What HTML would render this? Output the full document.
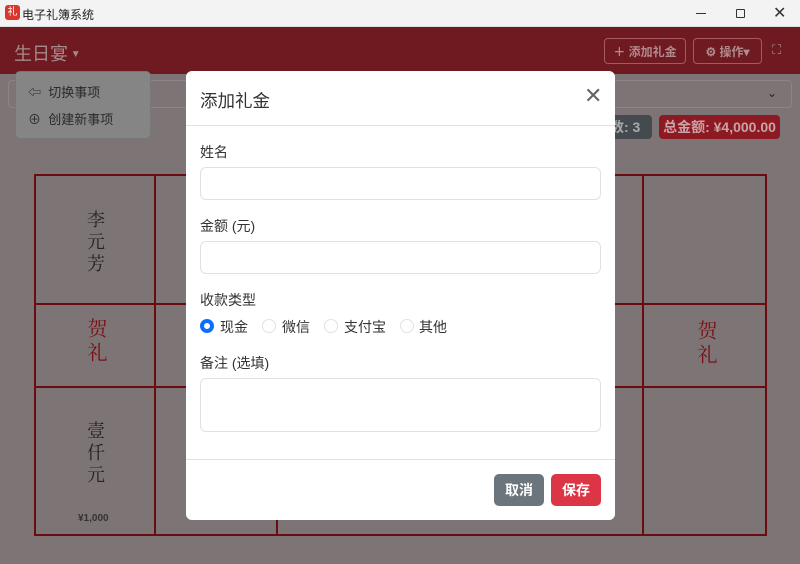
<!DOCTYPE html>
<html><head><meta charset="utf-8"><style>
*{box-sizing:border-box;margin:0;padding:0}
body{width:800px;height:564px;overflow:hidden;position:relative;background:#7d7476;font-family:"Liberation Sans","Noto Sans CJK SC",sans-serif}
.abs{position:absolute}
.tb{left:0;top:0;width:800px;height:27px;background:#f3f3f3;border-bottom:1px solid #ddd}
.hdr{left:0;top:27px;width:800px;height:47px;background:#6f1a21}
.btn{border:1px solid #a55a60;border-radius:4px;color:#b08a8d;font-size:12px;font-weight:bold;display:flex;align-items:center;justify-content:center}
.v{writing-mode:vertical-rl;font-family:"Noto Serif CJK SC",serif;font-size:18px;letter-spacing:4px}
.modal{left:186px;top:71px;width:429px;height:449px;background:#fff;border-radius:6px}
.lbl{font-size:14px;color:#333}
.inp{left:14px;width:401px;border:1px solid #dee2e6;border-radius:6px}
.r{position:absolute;top:248px;width:14px;height:14px;border:1px solid #dee2e6;border-radius:50%}
</style></head><body>
<div class="abs tb"></div>
<div class="abs" style="left:5px;top:5px;width:15px;height:15px;background:#d9372b;border-radius:3px;color:#fff;font-size:10px;text-align:center;line-height:15px">礼</div>
<div class="abs" style="left:22px;top:6px;font-size:12px;color:#222">电子礼簿系统</div>
<div class="abs" style="left:696px;top:13px;width:10px;height:1px;background:#333"></div>
<div class="abs" style="left:736px;top:9px;width:9px;height:9px;border:1px solid #333;border-radius:1px"></div>
<div class="abs" style="left:773px;top:3px;font-size:16px;color:#333">✕</div>
<div class="abs hdr"></div>
<div class="abs" style="left:14px;top:40px;font-size:18px;color:#a58a8c">生日宴<span style="font-size:10px;vertical-align:3px"> ▼</span></div>
<div class="abs btn" style="left:604px;top:38px;width:82px;height:26px">＋ 添加礼金</div>
<div class="abs btn" style="left:693px;top:38px;width:69px;height:26px">⚙ 操作▾</div>
<div class="abs" style="left:772px;top:42px;color:#a58a8c;font-size:13px">⛶</div>
<div class="abs" style="left:8px;top:80px;width:784px;height:28px;border:1px solid #8c8486;border-radius:4px;background:#7d7476"></div>
<div class="abs" style="left:767px;top:86px;color:#222;font-size:12px">⌄</div>
<div class="abs" style="left:600px;top:115px;width:52px;height:24px;background:#454a4f;border-radius:4px;color:#aaa;font-weight:bold;font-size:14px;line-height:24px;padding-left:10px">数: 3</div>
<div class="abs" style="left:659px;top:115px;width:121px;height:24px;background:#8d1a22;border-radius:4px;color:#c9a3a6;font-weight:bold;font-size:14px;line-height:24px;text-align:center">总金额: ¥4,000.00</div>
<div class="abs" style="left:15px;top:71px;width:136px;height:68px;background:#858585;border:1px solid #777;border-radius:5px"></div>
<div class="abs" style="left:28px;top:82px;font-size:13px;color:#2a2a2a">⇦&nbsp; 切换事项</div>
<div class="abs" style="left:28px;top:109px;font-size:13px;color:#2a2a2a">⊕&nbsp; 创建新事项</div>
<div class="abs" style="left:34px;top:174px;width:733px;height:362px;border:2px solid #6b0d10"></div>
<div class="abs" style="left:34px;top:303px;width:733px;height:2px;background:#6b0d10"></div>
<div class="abs" style="left:34px;top:386px;width:733px;height:2px;background:#6b0d10"></div>
<div class="abs" style="left:154px;top:174px;width:2px;height:362px;background:#6b0d10"></div>
<div class="abs" style="left:276px;top:174px;width:2px;height:362px;background:#6b0d10"></div>
<div class="abs" style="left:642px;top:174px;width:2px;height:362px;background:#6b0d10"></div>
<div class="abs v" style="left:83px;top:210px;color:#222">李元芳</div>
<div class="abs v" style="left:83px;top:318px;color:#7a1015;font-size:20px">贺礼</div>
<div class="abs v" style="left:83px;top:421px;color:#222">壹仟元</div>
<div class="abs" style="left:78px;top:513px;font-size:10px;font-weight:bold;color:#333">¥1,000</div>
<div class="abs v" style="left:693px;top:320px;color:#7a1015;font-size:20px">贺礼</div>
<div class="abs modal">
<div class="abs" style="left:14px;top:17px;font-size:17.5px;color:#333">添加礼金</div>
<div class="abs" style="left:398px;top:12px;font-size:22px;color:#666">✕</div>
<div class="abs" style="left:0;top:54px;width:429px;height:1px;background:#dee2e6"></div>
<div class="abs lbl" style="left:14px;top:71px">姓名</div>
<div class="abs inp" style="top:96px;height:33px"></div>
<div class="abs lbl" style="left:14px;top:145px">金额 (元)</div>
<div class="abs inp" style="top:170px;height:33px"></div>
<div class="abs lbl" style="left:14px;top:219px">收款类型</div>
<div class="r" style="left:14px;border:4px solid #0d6efd"></div><div class="abs lbl" style="left:34px;top:246px">现金</div>
<div class="r" style="left:76px"></div><div class="abs lbl" style="left:96px;top:246px">微信</div>
<div class="r" style="left:138px"></div><div class="abs lbl" style="left:158px;top:246px">支付宝</div>
<div class="r" style="left:214px"></div><div class="abs lbl" style="left:233px;top:246px">其他</div>
<div class="abs lbl" style="left:14px;top:282px">备注 (选填)</div>
<div class="abs inp" style="top:307px;height:54px"></div>
<div class="abs" style="left:0;top:388px;width:429px;height:1px;background:#dee2e6"></div>
<div class="abs" style="left:308px;top:403px;width:50px;height:32px;background:#6c757d;border-radius:5px;color:#fff;font-size:14px;font-weight:bold;line-height:32px;text-align:center">取消</div>
<div class="abs" style="left:365px;top:403px;width:50px;height:32px;background:#dc3545;border-radius:5px;color:#fff;font-size:14px;font-weight:bold;line-height:32px;text-align:center">保存</div>
</div>
</body></html>
